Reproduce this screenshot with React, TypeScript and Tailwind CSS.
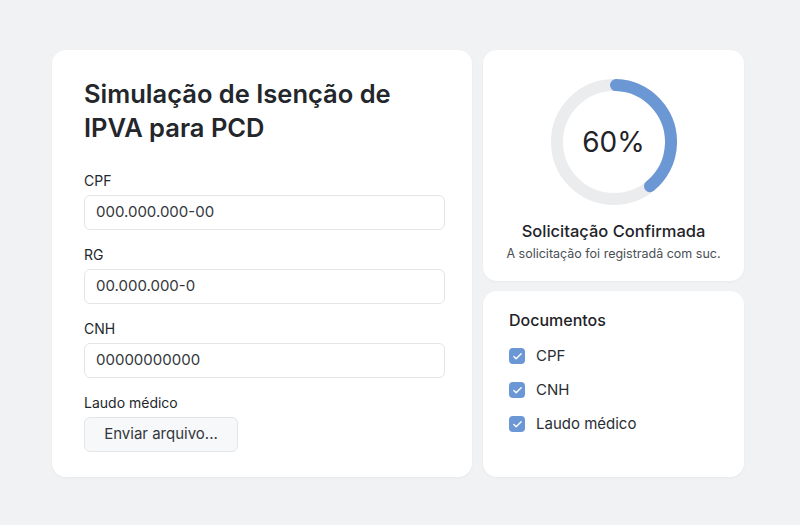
import { Check } from 'lucide-react'

const fields = [
  { label: 'CPF', value: '000.000.000-00' },
  { label: 'RG', value: '00.000.000-0' },
  { label: 'CNH', value: '00000000000' },
]

const documentos = ['CPF', 'CNH', 'Laudo médico']

function Progress({ percent }: { percent: number }) {
  const r = 57
  const c = 2 * Math.PI * r
  return (
    <div className="relative w-[126px] h-[126px]">
      <svg width="126" height="126" viewBox="0 0 126 126" className="-rotate-90">
        <circle cx="63" cy="63" r={r} fill="none" stroke="#ebecee" strokeWidth="12" />
        <circle
          cx="63"
          cy="63"
          r={r}
          fill="none"
          stroke="#6c97d5"
          strokeWidth="12"
          strokeLinecap="round"
          strokeDasharray={`${c * percent} ${c}`}
          transform="rotate(2 63 63)"
        />
      </svg>
      <div className="absolute inset-0 flex items-center justify-center text-[28px] text-[#1f2328]">
        60%
      </div>
    </div>
  )
}

export default function App() {
  return (
    <div className="min-h-[525px] w-[800px] bg-[#f1f2f4] pt-[50px] pl-[52px] font-['Inter',sans-serif]">
      <div className="flex gap-[11px] items-start">
        <div className="w-[420px] h-[427px] bg-white rounded-[14px] shadow-[0_1px_3px_rgba(0,0,0,0.04)] pl-8 pt-[27px]">
          <h1 className="text-[25.5px] leading-[34px] font-semibold text-[#23272c]">
            Simulação de Isenção de
            <br />
            IPVA para PCD
          </h1>

          <div className="mt-[26px] flex flex-col gap-[15px]">
            {fields.map((f) => (
              <div key={f.label}>
                <div className="text-[14px] leading-5 text-[#24282d] mb-1">{f.label}</div>
                <div className="w-[361px] h-[35px] rounded-[6px] border border-[#e3e5e8] flex items-center pl-[11px] text-[15px] text-[#33373c]">
                  {f.value}
                </div>
              </div>
            ))}
            <div>
              <div className="text-[14px] leading-5 text-[#24282d] mb-1">Laudo médico</div>
              <button className="w-[154px] h-[35px] rounded-[6px] border border-[#e3e5e8] bg-[#f7f8fa] text-[15px] text-[#33373c]">
                Enviar arquivo...
              </button>
            </div>
          </div>
        </div>

        <div className="w-[261px] flex flex-col gap-[10px]">
          <div className="h-[231px] bg-white rounded-[14px] shadow-[0_1px_3px_rgba(0,0,0,0.04)] flex flex-col items-center pt-[29px]">
            <Progress percent={0.385} />
            <div className="mt-[14px] text-[16.5px] leading-6 font-medium text-[#1f2328]">
              Solicitação Confirmada
            </div>
            <div className="mt-[1px] text-[12.5px] leading-5 text-[#4a4f55]">
              A solicitação foi registradâ com suc.
            </div>
          </div>

          <div className="h-[186px] bg-white rounded-[14px] shadow-[0_1px_3px_rgba(0,0,0,0.04)] pl-[26px] pt-[17px]">
            <div className="text-[16px] leading-6 font-medium text-[#1f2328]">Documentos</div>
            <div className="mt-[14px] flex flex-col gap-[14px]">
              {documentos.map((d) => (
                <div key={d} className="flex items-center gap-[11px] h-5">
                  <span className="w-4 h-4 rounded-[4px] bg-[#6c97d5] flex items-center justify-center">
                    <Check className="w-[11px] h-[11px] text-white" strokeWidth={3} />
                  </span>
                  <span className="text-[15px] text-[#2a2e33]">{d}</span>
                </div>
              ))}
            </div>
          </div>
        </div>
      </div>
    </div>
  )
}
